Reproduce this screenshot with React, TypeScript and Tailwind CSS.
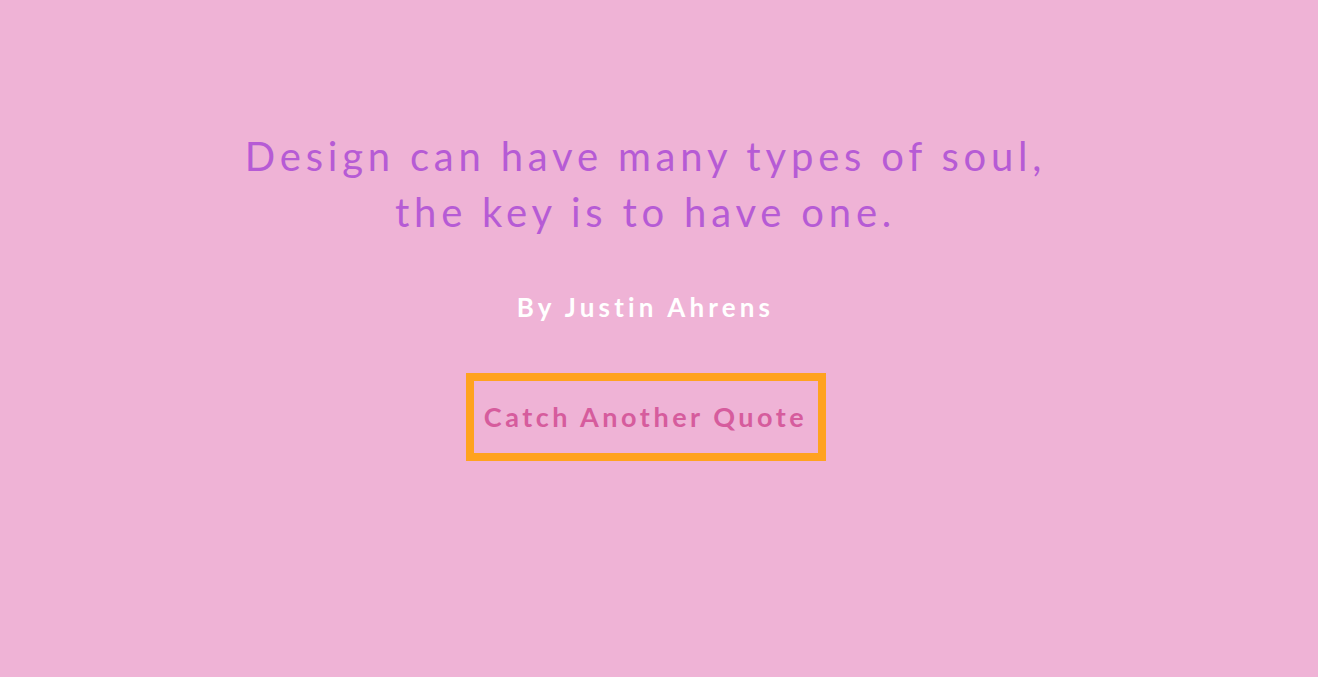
export default function App() {
  return (
    <div className="flex min-h-[677px] w-full flex-col items-center bg-[#efb3d6] pr-[27px] pt-[128px] font-['Lato',sans-serif]">
      <p className="text-center text-[40px] leading-[56px] tracking-[0.12em] text-[#b65bd5]">
        Design can have many types of soul,
        <br />
        the key is to have one.
      </p>
      <p className="mt-[48px] text-[26px] font-bold tracking-[0.16em] text-white">
        By Justin Ahrens
      </p>
      <button
        type="button"
        className="mt-[46px] flex h-[88px] w-[360px] items-center justify-center border-[8px] border-[#ffa21f] text-[27px] font-bold tracking-[0.13em] text-[#d65c9d]"
      >
        Catch Another Quote
      </button>
    </div>
  );
}
